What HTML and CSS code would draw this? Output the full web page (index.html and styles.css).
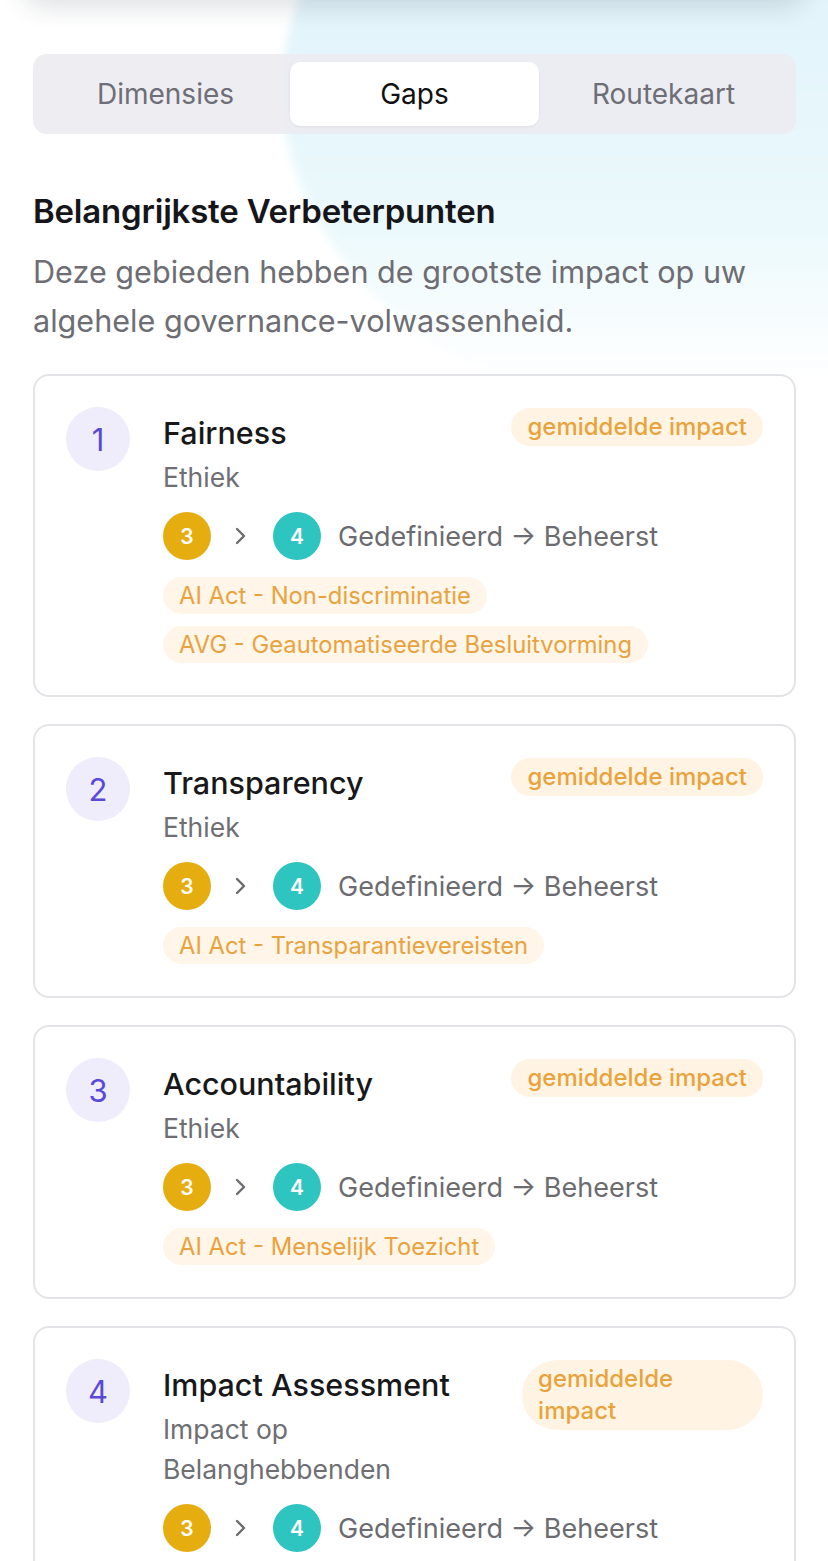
FILE: index.html
```html
<!DOCTYPE html>
<html lang="nl">
<head>
    <meta charset="UTF-8">
    <meta name="viewport" content="width=device-width, initial-scale=1.0">
    <title>Gaps</title>
    <link rel="stylesheet" href="styles.css">
</head>
<body>
    <div class="page">
        <div class="glow"></div>
        <div class="top-shade"></div>

        <nav class="tabs">
            <button class="tab">Dimensies</button>
            <button class="tab active">Gaps</button>
            <button class="tab">Routekaart</button>
        </nav>

        <h2 class="section-title">Belangrijkste Verbeterpunten</h2>
        <p class="section-lead">Deze gebieden hebben de grootste impact op uw algehele governance-volwassenheid.</p>

        <div class="gap-list">
            <article class="gap-card">
                <div class="rank">1</div>
                <div class="gap-body">
                    <div class="gap-head">
                        <div class="gap-info">
                            <h3>Fairness</h3>
                            <div class="gap-dim">Ethiek</div>
                        </div>
                        <span class="impact">gemiddelde impact</span>
                    </div>
                    <div class="levels">
                        <span class="lvl lvl-from">3</span>
                        <svg class="chev" width="14" height="22" viewBox="0 0 14 22"><path d="M3 4l7 7-7 7" fill="none" stroke="#6b6b70" stroke-width="2.4" stroke-linecap="round" stroke-linejoin="round"/></svg>
                        <span class="lvl lvl-to">4</span>
                        <span class="level-names">Gedefinieerd → Beheerst</span>
                    </div>
                    <div class="refs">
                        <span class="ref">AI Act - Non-discriminatie</span>
                        <span class="ref">AVG - Geautomatiseerde Besluitvorming</span>
                    </div>
                </div>
            </article>

            <article class="gap-card">
                <div class="rank">2</div>
                <div class="gap-body">
                    <div class="gap-head">
                        <div class="gap-info">
                            <h3>Transparency</h3>
                            <div class="gap-dim">Ethiek</div>
                        </div>
                        <span class="impact">gemiddelde impact</span>
                    </div>
                    <div class="levels">
                        <span class="lvl lvl-from">3</span>
                        <svg class="chev" width="14" height="22" viewBox="0 0 14 22"><path d="M3 4l7 7-7 7" fill="none" stroke="#6b6b70" stroke-width="2.4" stroke-linecap="round" stroke-linejoin="round"/></svg>
                        <span class="lvl lvl-to">4</span>
                        <span class="level-names">Gedefinieerd → Beheerst</span>
                    </div>
                    <div class="refs">
                        <span class="ref">AI Act - Transparantievereisten</span>
                    </div>
                </div>
            </article>

            <article class="gap-card">
                <div class="rank">3</div>
                <div class="gap-body">
                    <div class="gap-head">
                        <div class="gap-info">
                            <h3>Accountability</h3>
                            <div class="gap-dim">Ethiek</div>
                        </div>
                        <span class="impact">gemiddelde impact</span>
                    </div>
                    <div class="levels">
                        <span class="lvl lvl-from">3</span>
                        <svg class="chev" width="14" height="22" viewBox="0 0 14 22"><path d="M3 4l7 7-7 7" fill="none" stroke="#6b6b70" stroke-width="2.4" stroke-linecap="round" stroke-linejoin="round"/></svg>
                        <span class="lvl lvl-to">4</span>
                        <span class="level-names">Gedefinieerd → Beheerst</span>
                    </div>
                    <div class="refs">
                        <span class="ref">AI Act - Menselijk Toezicht</span>
                    </div>
                </div>
            </article>

            <article class="gap-card">
                <div class="rank">4</div>
                <div class="gap-body">
                    <div class="gap-head">
                        <div class="gap-info">
                            <h3>Impact Assessment</h3>
                            <div class="gap-dim">Impact op Belanghebbenden</div>
                        </div>
                        <span class="impact">gemiddelde impact</span>
                    </div>
                    <div class="levels">
                        <span class="lvl lvl-from">3</span>
                        <svg class="chev" width="14" height="22" viewBox="0 0 14 22"><path d="M3 4l7 7-7 7" fill="none" stroke="#6b6b70" stroke-width="2.4" stroke-linecap="round" stroke-linejoin="round"/></svg>
                        <span class="lvl lvl-to">4</span>
                        <span class="level-names">Gedefinieerd → Beheerst</span>
                    </div>
                </div>
            </article>
        </div>
    </div>
</body>
</html>
```

FILE: styles.css
```css
body{
    margin: 0;
    background-color: #ffffff;
    font-family: Inter, "Noto Sans", sans-serif;
    color: #1c1c1e;
}
.page{
    position: relative;
    overflow: hidden;
    padding: 54px 32px 40px 33px;
    min-height: 1561px;
    box-sizing: border-box;
}

/* soft cyan glow behind the header */
.glow{
    position: absolute;
    left: 282px;
    top: -260px;
    width: 980px;
    height: 700px;
    border-radius: 50%;
    background: linear-gradient(to bottom, #e0edf8 0%, #e4f5fb 45%, #ecf9fc 70%, rgba(255,255,255,0) 92%);
    filter: blur(4px);
}
/* shadow of the panel above the fold */
.top-shade{
    position: absolute;
    left: 24px;
    right: 24px;
    top: -60px;
    height: 60px;
    border-radius: 20px;
    background: #fafafa;
    box-shadow: 0 6px 26px rgba(40, 50, 70, 0.16);
}
.tabs{
    position: relative;
    display: grid;
    grid-template-columns: 1fr 1fr 1fr;
    padding: 8px;
    background-color: rgba(236, 236, 241, 0.92);
    border-radius: 14px;
}
.tab{
    height: 64px;
    border: none;
    background: transparent;
    font-family: inherit;
    font-size: 28px;
    color: #6e6e76;
    border-radius: 10px;
}
.tab.active{
    background: #ffffff;
    color: #111114;
    box-shadow: 0 1px 3px rgba(0,0,0,0.06);
}

.section-title{
    position: relative;
    margin: 55px 0 0;
    font-size: 33px;
    line-height: 44px;
    font-weight: 600;
    letter-spacing: -0.2px;
    color: #16161a;
}
.section-lead{
    position: relative;
    margin: 14px 0 0;
    font-size: 30.6px;
    line-height: 49px;
    color: #6d6d73;
}

.gap-list{
    position: relative;
    display: flex;
    flex-direction: column;
    gap: 27px;
    margin-top: 29px;
}
.gap-card{
    display: flex;
    gap: 33px;
    padding: 33px 31px 32px 31px;
    background: #ffffff;
    border: 2px solid #e4e4e8;
    border-radius: 16px;
}
.rank{
    flex: none;
    width: 64px;
    height: 64px;
    margin-top: -2px;
    border-radius: 50%;
    background: #efecfb;
    color: #5a48d6;
    font-size: 31px;
    display: flex;
    align-items: center;
    justify-content: center;
}
.gap-body{
    flex: 1;
    min-width: 0;
    display: flex;
    flex-direction: column;
}
.gap-head{
    display: flex;
    justify-content: space-between;
    align-items: flex-start;
    gap: 16px;
}
.gap-info h3{
    margin: 0;
    font-size: 30.5px;
    line-height: 48px;
    font-weight: 500;
    color: #18181b;
}
.gap-dim{
    font-size: 26.5px;
    line-height: 40px;
    color: #6e6e73;
}
.impact{
    margin-top: -1px;
    padding: 3px 16px;
    border-radius: 999px;
    background: #fff4e4;
    color: #e9a33c;
    font-size: 24px;
    line-height: 32px;
    font-weight: 500;
}

.levels{
    display: flex;
    align-items: center;
    margin-top: 15px;
}
.lvl{
    width: 48px;
    height: 48px;
    border-radius: 50%;
    color: #ffffff;
    font-size: 21px;
    font-weight: 600;
    display: flex;
    align-items: center;
    justify-content: center;
}
.lvl-from{
    background: #e6ad10;
}
.lvl-to{
    background: #2ec4c0;
}
.chev{
    margin: 0 25px 0 23px;
}
.level-names{
    margin-left: 17px;
    font-size: 27px;
    color: #6b6b70;
}

.refs{
    display: flex;
    flex-direction: column;
    align-items: flex-start;
    gap: 12px;
    margin-top: 17px;
}
.ref{
    padding: 3px 16px;
    border-radius: 999px;
    background: #fff5e8;
    color: #e8a33e;
    font-size: 23.8px;
    line-height: 31px;
}
```
